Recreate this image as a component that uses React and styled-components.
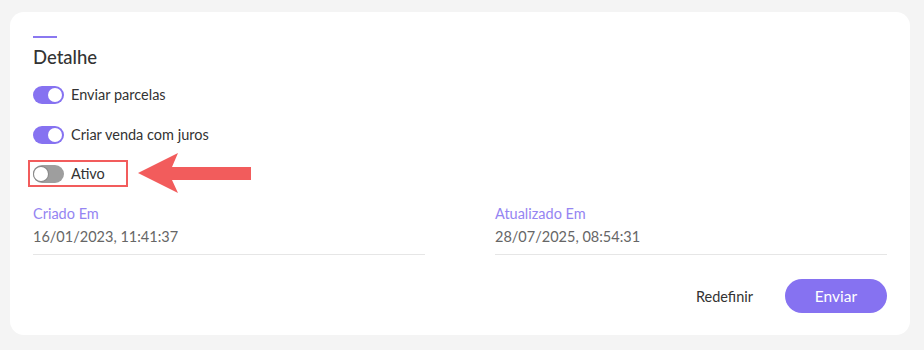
import React from 'react'
import styled, { createGlobalStyle } from 'styled-components'

const fields = [
  { label: 'Criado Em', value: '16/01/2023, 11:41:37' },
  { label: 'Atualizado Em', value: '28/07/2025, 08:54:31' },
]

const Arrow = () => (
  <svg width="114" height="42" viewBox="0 0 114 42">
    <polygon points="0,20 40,0 34,14 113,14 113,27 34,27 40,40" fill="#f25c5c" />
  </svg>
)

const App = () => (
  <Page>
    <Card>
      <Accent />
      <Title>Detalhe</Title>
      <Switches>
        <SwitchRow>
          <Toggle $on />
          <SwitchLabel>Enviar parcelas</SwitchLabel>
        </SwitchRow>
        <SwitchRow>
          <Toggle $on />
          <SwitchLabel>Criar venda com juros</SwitchLabel>
        </SwitchRow>
        <HighlightRow>
          <Marked>
            <Toggle />
            <SwitchLabel>Ativo</SwitchLabel>
          </Marked>
          <Arrow />
        </HighlightRow>
      </Switches>
      <Fields>
        {fields.map(f => (
          <Field key={f.label}>
            <FieldLabel>{f.label}</FieldLabel>
            <FieldValue>{f.value}</FieldValue>
          </Field>
        ))}
      </Fields>
      <Actions>
        <GhostButton>Redefinir</GhostButton>
        <PrimaryButton>Enviar</PrimaryButton>
      </Actions>
    </Card>
    <GlobalStyle />
  </Page>
)

const GlobalStyle = createGlobalStyle`
  * {
    box-sizing: border-box;
  }
  html,
  body {
    margin: 0;
    padding: 0;
    background: #f4f4f4;
    font-family: Lato, "Noto Sans", sans-serif;
  }
`

const Page = styled.div`
  width: 924px;
  height: 350px;
  padding: 12px 14px 15px 10px;
`

const Card = styled.div`
  background: #fff;
  border-radius: 14px;
  height: 100%;
  padding: 24px 23px 0 23px;
`

const Accent = styled.div`
  width: 24px;
  height: 2px;
  background: #8a78f0;
`

const Title = styled.h2`
  margin: 8px 0 0;
  font-size: 18.5px;
  font-weight: 500;
  color: #333;
  line-height: 22px;
`

const Switches = styled.div`
  display: flex;
  flex-direction: column;
  margin-top: 17px;
  gap: 21px;
`

const SwitchRow = styled.div`
  display: flex;
  align-items: center;
  gap: 7px;
  height: 19px;
`

const HighlightRow = styled.div`
  display: flex;
  align-items: center;
  gap: 10px;
  height: 27px;
  margin-left: -5px;
  margin-top: -5px;
`

const Marked = styled.div`
  display: flex;
  align-items: center;
  gap: 7px;
  width: 100px;
  height: 27px;
  padding-left: 3px;
  border: 2px solid #f25c5c;
`

const Toggle = styled.span`
  position: relative;
  width: 31px;
  height: 18px;
  border-radius: 9px;
  background: ${p => (p.$on ? '#8672f1' : '#9e9e9e')};
  flex-shrink: 0;
  &::after {
    content: '';
    position: absolute;
    top: 2px;
    left: ${p => (p.$on ? '15px' : '1px')};
    width: 14px;
    height: 14px;
    border-radius: 50%;
    background: #fff;
    box-shadow: ${p => (p.$on ? 'none' : '0 0 0 1px #888')};
  }
`

const SwitchLabel = styled.span`
  font-size: 14.5px;
  color: #333;
`

const Fields = styled.div`
  display: grid;
  grid-template-columns: 392px 392px;
  justify-content: space-between;
  margin-top: 18px;
`

const Field = styled.div`
  display: flex;
  flex-direction: column;
  gap: 6px;
  padding-bottom: 9px;
  border-bottom: 1px solid #e6e6e6;
`

const FieldLabel = styled.span`
  font-size: 14.5px;
  color: #9585f2;
`

const FieldValue = styled.span`
  font-size: 14.5px;
  color: #666;
`

const Actions = styled.div`
  display: flex;
  justify-content: flex-end;
  align-items: center;
  gap: 12px;
  margin-top: 24px;
`

const GhostButton = styled.button`
  border: none;
  background: none;
  font-family: inherit;
  font-size: 14.5px;
  color: #333;
  padding: 0 20px;
  height: 34px;
`

const PrimaryButton = styled.button`
  border: none;
  background: #8672f1;
  color: #fff;
  font-family: inherit;
  font-size: 15.5px;
  width: 102px;
  height: 34px;
  border-radius: 17px;
`

export default App
